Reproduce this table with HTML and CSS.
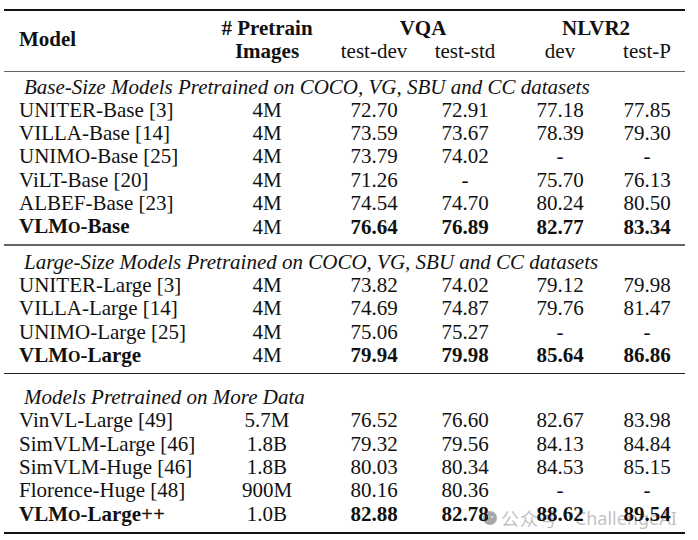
FILE: index.html
```html
<!DOCTYPE html>
<html>
<head>
<meta charset="utf-8">
<link rel="stylesheet" href="styles.css">
</head>
<body>
<div class="page">
<table class="results">
  <colgroup>
    <col class="c-model"><col class="c-pre"><col class="c-td"><col class="c-ts"><col class="c-dev"><col class="c-tp">
  </colgroup>
  <thead>
    <tr class="h1">
      <th rowspan="2" class="model-h">Model</th>
      <th># Pretrain</th>
      <th colspan="2" class="vqa">VQA</th>
      <th colspan="2" class="nlvr">NLVR2</th>
    </tr>
    <tr class="h2">
      <th>Images</th>
      <td>test-dev</td><td>test-std</td><td>dev</td><td class="last">test-P</td>
    </tr>
  </thead>
  <tbody class="sec sec1">
    <tr class="group"><td colspan="6">Base-Size Models Pretrained on COCO, VG, SBU and CC datasets</td></tr>
    <tr><td class="name">UNITER-Base [3]</td><td>4M</td><td>72.70</td><td>72.91</td><td>77.18</td><td class="last">77.85</td></tr>
    <tr><td class="name">VILLA-Base [14]</td><td>4M</td><td>73.59</td><td>73.67</td><td>78.39</td><td class="last">79.30</td></tr>
    <tr><td class="name">UNIMO-Base [25]</td><td>4M</td><td>73.79</td><td>74.02</td><td>-</td><td class="last">-</td></tr>
    <tr><td class="name">ViLT-Base [20]</td><td>4M</td><td>71.26</td><td>-</td><td>75.70</td><td class="last">76.13</td></tr>
    <tr><td class="name">ALBEF-Base [23]</td><td>4M</td><td>74.54</td><td>74.70</td><td>80.24</td><td class="last">80.50</td></tr>
    <tr class="ours"><td class="name">VLM<span class="sc">O</span>-Base</td><td class="plain">4M</td><td>76.64</td><td>76.89</td><td>82.77</td><td class="last">83.34</td></tr>
  </tbody>
  <tbody class="sec sec2">
    <tr class="group"><td colspan="6">Large-Size Models Pretrained on COCO, VG, SBU and CC datasets</td></tr>
    <tr><td class="name">UNITER-Large [3]</td><td>4M</td><td>73.82</td><td>74.02</td><td>79.12</td><td class="last">79.98</td></tr>
    <tr><td class="name">VILLA-Large [14]</td><td>4M</td><td>74.69</td><td>74.87</td><td>79.76</td><td class="last">81.47</td></tr>
    <tr><td class="name">UNIMO-Large [25]</td><td>4M</td><td>75.06</td><td>75.27</td><td>-</td><td class="last">-</td></tr>
    <tr class="ours"><td class="name">VLM<span class="sc">O</span>-Large</td><td class="plain">4M</td><td>79.94</td><td>79.98</td><td>85.64</td><td class="last">86.86</td></tr>
  </tbody>
  <tbody class="sec sec3">
    <tr class="group"><td colspan="6">Models Pretrained on More Data</td></tr>
    <tr><td class="name">VinVL-Large [49]</td><td>5.7M</td><td>76.52</td><td>76.60</td><td>82.67</td><td class="last">83.98</td></tr>
    <tr><td class="name">SimVLM-Large [46]</td><td>1.8B</td><td>79.32</td><td>79.56</td><td>84.13</td><td class="last">84.84</td></tr>
    <tr><td class="name">SimVLM-Huge [46]</td><td>1.8B</td><td>80.03</td><td>80.34</td><td>84.53</td><td class="last">85.15</td></tr>
    <tr><td class="name">Florence-Huge [48]</td><td>900M</td><td>80.16</td><td>80.36</td><td>-</td><td class="last">-</td></tr>
    <tr class="ours"><td class="name">VLM<span class="sc">O</span>-Large++</td><td class="plain">1.0B</td><td>82.88</td><td>82.78</td><td>88.62</td><td class="last">89.54</td></tr>
  </tbody>
</table>
<div class="watermark">
  <svg class="wm-icon" width="14" height="14" viewBox="0 0 14 14"><circle cx="7" cy="7" r="7" fill="#a8a8a8"/><circle cx="5" cy="6" r="1.1" fill="#e6e6e6"/><circle cx="9" cy="6" r="1.1" fill="#e6e6e6"/></svg>
  <span class="wm-cn">公众号</span>
  <span class="wm-dot">·</span>
  <span class="wm-en">ChallengeAI</span>
</div>
</div>
</body>
</html>
```

FILE: styles.css
```css
html, body {
  margin: 0;
  padding: 0;
  background: #ffffff;
}
.page {
  position: relative;
  width: 698px;
  height: 540px;
  padding-top: 9px;
  box-sizing: border-box;
}
.results {
  position: relative;
  z-index: 1;
  margin-left: 4px;
  width: 681px;
  border-collapse: collapse;
  table-layout: fixed;
  font-family: "Liberation Serif", "Times New Roman", serif;
  font-size: 21px;
  line-height: 23.3px;
  color: #111;
}
.c-model { width: 210px; }
.c-pre { width: 106px; }
.c-td { width: 108px; }
.c-ts { width: 74px; }
.c-dev { width: 116px; }
.c-tp { width: 67px; }
.results td, .results th {
  padding: 0;
  text-align: center;
  white-space: nowrap;
}
.results .last { padding-right: 9px; }
thead {
  border-top: 2px solid #111;
  border-bottom: 1.5px solid #666;
}
thead th { font-weight: bold; }
.h1 th { padding-top: 6px; }
.h2 th, .h2 td { padding-bottom: 7px; }
.results th.model-h {
  text-align: left;
  padding-left: 15px;
  padding-top: 0;
  padding-bottom: 2px;
}
.results th.vqa { padding-left: 24px; }
.results th.nlvr { padding-left: 14px; padding-right: 9px; }
.results td.name {
  text-align: left;
  padding-left: 15px;
}
.group td {
  text-align: left;
  font-style: italic;
  padding-left: 20px !important;
}
.sec1 .group td { padding-top: 4px; }
.sec2 .group td { padding-top: 5px; }
.sec3 .group td { padding-top: 12px; }
.sec1 { border-bottom: 2px solid #666; }
.sec2 { border-bottom: 1.5px solid #222; }
.sec3 { border-bottom: 2px solid #111; }
.sec1 .ours td { padding-bottom: 4px; }
.sec2 .ours td { padding-bottom: 5px; }
.sec3 .ours td { padding-bottom: 5px; }
.ours td { font-weight: bold; }
.ours td.plain { font-weight: normal; }
.sc {
  font-size: 16px;
}
.watermark {
  position: absolute;
  left: 483px;
  top: 505px;
  display: flex;
  align-items: center;
  font-family: "Noto Sans", "Noto Sans CJK SC", sans-serif;
  font-size: 18px;
  color: rgba(165, 165, 165, 0.7);
  z-index: 0;
  white-space: nowrap;
}
.wm-icon { flex: none; margin-right: 4px; }
.wm-cn { font-family: "Noto Sans CJK SC", sans-serif; letter-spacing: 1px; }
.wm-dot { margin: 0 6px; }
.wm-en { letter-spacing: 0; }
```
